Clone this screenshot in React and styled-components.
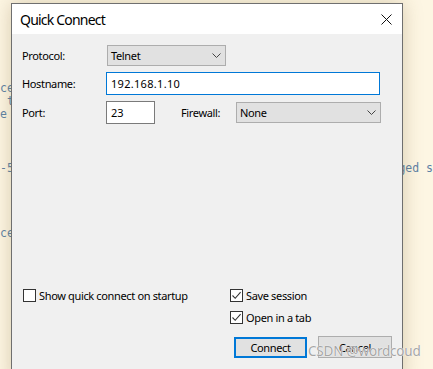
import React from 'react';
import styled, { createGlobalStyle } from 'styled-components';

const GlobalStyle = createGlobalStyle`
  html, body {
    margin: 0;
    padding: 0;
    width: 433px;
    height: 369px;
    overflow: hidden;
    background: #fdf6e3;
  }
`;

const Desktop = styled.div`
  position: relative;
  width: 433px;
  height: 369px;
  overflow: hidden;
  background: #fdf6e3;
`;

const CodeLayer = styled.div`
  padding-top: 82px;
  font-family: "DejaVu Sans Mono", monospace;
  font-size: 11.5px;
  line-height: 13px;
  color: #5d82a6;
`;

const CodeLine = styled.div`
  display: flex;
  height: 13px;
  margin-top: ${p => p.gap || 0}px;
  white-space: pre;
`;

const CodeLeft = styled.span`
  width: 401px;
  padding-left: ${p => p.indent || 0}px;
  box-sizing: border-box;
`;

const Window = styled.div`
  position: absolute;
  left: 11px;
  top: 3px;
  width: 392px;
  height: 380px;
  box-sizing: border-box;
  border: 1px solid #6f6f6f;
  background: #f0f0f0;
  box-shadow: 0 0 18px rgba(120, 90, 40, 0.28);
  font-family: "Noto Sans", "Liberation Sans", sans-serif;
  color: #000;
  display: flex;
  flex-direction: column;
`;

const TitleBar = styled.div`
  height: 30px;
  background: #fff;
  display: flex;
  align-items: center;
  justify-content: space-between;
  padding: 0 9px 0 8px;
`;

const Title = styled.span`
  font-size: 14px;
  letter-spacing: -0.8px;
`;

const CloseIcon = styled.svg`
  width: 11px;
  height: 11px;
  margin-right: 1px;
`;

const Body = styled.div`
  padding: 11px 10px 0 10px;
  font-size: 11px;
  letter-spacing: -0.35px;
`;

const Row = styled.div`
  display: flex;
  align-items: center;
  margin-top: ${p => p.gap || 0}px;
`;

const Label = styled.span`
  width: ${p => p.w}px;
  margin-left: ${p => p.ml || 0}px;
  flex: none;
`;

const Select = styled.div`
  width: ${p => p.w}px;
  height: 21px;
  box-sizing: border-box;
  border: 1px solid #adadad;
  background: #e1e1e1;
  display: flex;
  align-items: center;
  justify-content: space-between;
  padding: 0 3px 0 3px;
`;

const Chevron = styled.svg`
  width: 9px;
  height: 5px;
  margin-right: 1px;
`;

const Input = styled.div`
  width: ${p => p.w}px;
  height: 23px;
  box-sizing: border-box;
  border: 1px solid ${p => (p.focused ? '#0078d7' : '#7a7a7a')};
  background: #fff;
  display: flex;
  align-items: center;
  padding: 0 4px;
  margin-left: -1px;
  letter-spacing: ${p => p.spacing || 0}px;
`;

const Bottom = styled.div`
  margin-top: 165px;
  display: grid;
  grid-template-columns: 207px 1fr;
  row-gap: 9px;
`;

const Check = styled.label`
  display: flex;
  align-items: center;
  gap: 3px;
  height: 13px;
  padding-left: 1px;
  grid-column: ${p => p.col};
`;

const Box = styled.span`
  width: 13px;
  height: 13px;
  box-sizing: border-box;
  border: 1px solid #333;
  background: #fff;
  display: flex;
  align-items: center;
  justify-content: center;
  flex: none;
`;

const Buttons = styled.div`
  grid-column: 2;
  display: flex;
  gap: 11px;
  padding-left: 5px;
  margin-top: 3px;
`;

const Button = styled.div`
  width: ${p => p.w}px;
  height: ${p => (p.primary ? 21 : 22)}px;
  margin-top: ${p => (p.primary ? 1 : 0)}px;
  box-sizing: border-box;
  border: ${p => (p.primary ? '2px solid #0078d7' : '1px solid #adadad')};
  background: #e1e1e1;
  display: flex;
  align-items: center;
  justify-content: center;
`;

const Watermark = styled.div`
  position: absolute;
  left: 308px;
  top: 342px;
  font-family: "Noto Sans", "Liberation Sans", sans-serif;
  font-size: 13.5px;
  letter-spacing: -0.2px;
  color: #a6a6a6;
  text-shadow: 0 0 1px #fff, 0 0 1px #fff;
  white-space: nowrap;
`;

const Tick = () => (
  <svg width="11" height="11" viewBox="0 0 11 11">
    <path d="M1.5 5.5 L4.2 8.3 L9.6 2.2" fill="none" stroke="#333" strokeWidth="1.1" />
  </svg>
);

const Arrow = () => (
  <Chevron viewBox="0 0 9 5">
    <path d="M0.5 0.5 L4.5 4.5 L8.5 0.5" fill="none" stroke="#444" strokeWidth="1" />
  </Chevron>
);

const CheckItem = ({ col, checked, children }) => (
  <Check col={col}>
    <Box>{checked && <Tick />}</Box>
    <span>{children}</span>
  </Check>
);

export default function App() {
  return (
    <Desktop>
      <GlobalStyle />
      <CodeLayer>
        <CodeLine><CodeLeft indent={-1}>ce</CodeLeft></CodeLine>
        <CodeLine><CodeLeft indent={-1}> t</CodeLeft></CodeLine>
        <CodeLine><CodeLeft indent={-1}>e</CodeLeft></CodeLine>
        <CodeLine gap={41}><CodeLeft indent={-1}>-5</CodeLeft><span>ged s</span></CodeLine>
        <CodeLine gap={52}><CodeLeft indent={-1}>ce</CodeLeft></CodeLine>
      </CodeLayer>

      <Window>
        <TitleBar>
          <Title>Quick Connect</Title>
          <CloseIcon viewBox="0 0 11 11">
            <path d="M0.5 0.5 L10.5 10.5 M10.5 0.5 L0.5 10.5" stroke="#111" strokeWidth="1" />
          </CloseIcon>
        </TitleBar>
        <Body>
          <Row>
            <Label w={85}>Protocol:</Label>
            <Select w={119}>
              <span>Telnet</span>
              <Arrow />
            </Select>
          </Row>
          <Row gap={6}>
            <Label w={85}>Hostname:</Label>
            <Input w={274} focused spacing={0.3}>192.168.1.10</Input>
          </Row>
          <Row gap={6}>
            <Label w={85}>Port:</Label>
            <Input w={49}>23</Input>
            <Label w={55} ml={26}>Firewall:</Label>
            <Select w={145}>
              <span>None</span>
              <Arrow />
            </Select>
          </Row>
          <Bottom>
            <CheckItem col={1}>Show quick connect on startup</CheckItem>
            <CheckItem col={2} checked>Save session</CheckItem>
            <CheckItem col={2} checked>Open in a tab</CheckItem>
            <Buttons>
              <Button primary w={73}>Connect</Button>
              <Button w={74}>Cancel</Button>
            </Buttons>
          </Bottom>
        </Body>
      </Window>

      <Watermark>CSDN @wordcoud</Watermark>
    </Desktop>
  );
}
